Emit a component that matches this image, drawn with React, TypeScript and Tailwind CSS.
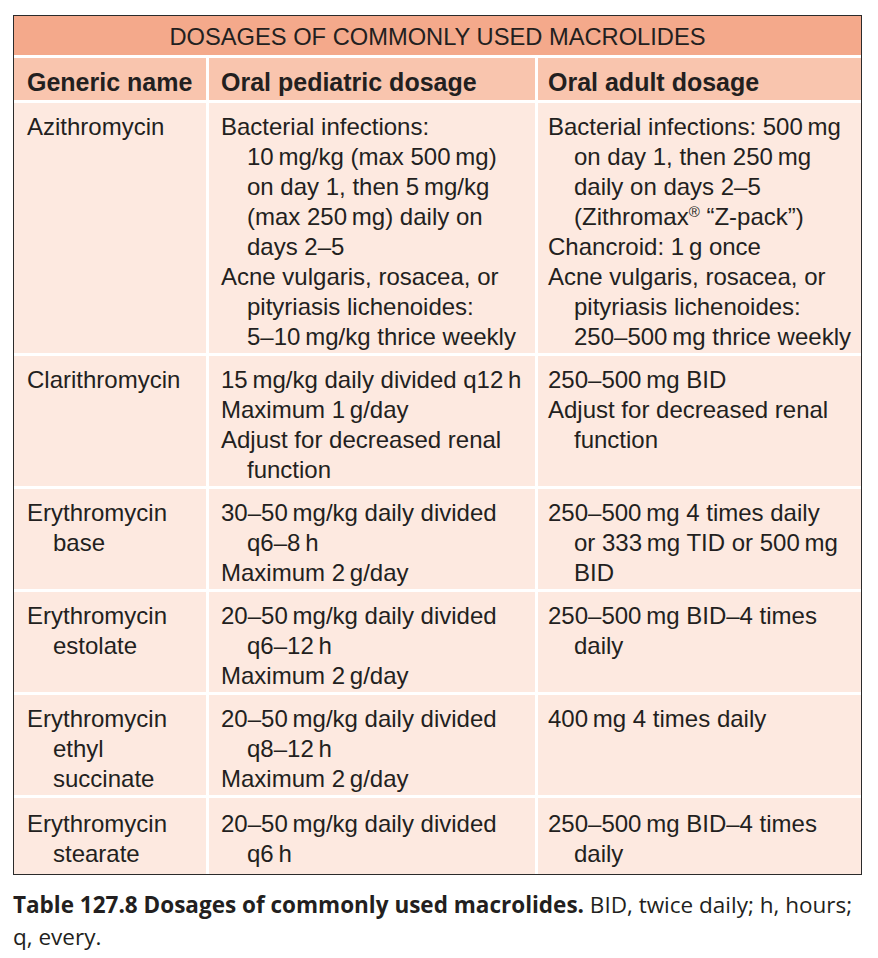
import React from "react";

type Line = React.ReactNode;
type Cell = Line[][];

const T = "\u2009";

const rows: Cell[][] = [
  [
    [["Azithromycin"]],
    [
      [
        "Bacterial infections:",
        `10${T}mg/kg (max 500${T}mg)`,
        `on day 1, then 5${T}mg/kg`,
        `(max 250${T}mg) daily on`,
        "days 2–5",
      ],
      ["Acne vulgaris, rosacea, or", "pityriasis lichenoides:", `5–10${T}mg/kg thrice weekly`],
    ],
    [
      [
        `Bacterial infections: 500${T}mg`,
        `on day 1, then 250${T}mg`,
        "daily on days 2–5",
        <>
          (Zithromax<sup className="text-[15px] -top-[0.55em]">®</sup> “Z-pack”)
        </>,
      ],
      [`Chancroid: 1${T}g once`],
      ["Acne vulgaris, rosacea, or", "pityriasis lichenoides:", `250–500${T}mg thrice weekly`],
    ],
  ],
  [
    [["Clarithromycin"]],
    [[`15${T}mg/kg daily divided q12${T}h`], [`Maximum 1${T}g/day`], ["Adjust for decreased renal", "function"]],
    [[`250–500${T}mg BID`], ["Adjust for decreased renal", "function"]],
  ],
  [
    [["Erythromycin", "base"]],
    [[`30–50${T}mg/kg daily divided`, `q6–8${T}h`], [`Maximum 2${T}g/day`]],
    [[`250–500${T}mg 4 times daily`, `or 333${T}mg TID or 500${T}mg`, "BID"]],
  ],
  [
    [["Erythromycin", "estolate"]],
    [[`20–50${T}mg/kg daily divided`, `q6–12${T}h`], [`Maximum 2${T}g/day`]],
    [[`250–500${T}mg BID–4 times`, "daily"]],
  ],
  [
    [["Erythromycin", "ethyl", "succinate"]],
    [[`20–50${T}mg/kg daily divided`, `q8–12${T}h`], [`Maximum 2${T}g/day`]],
    [[`400${T}mg 4 times daily`]],
  ],
  [
    [["Erythromycin", "stearate"]],
    [[`20–50${T}mg/kg daily divided`, `q6${T}h`]],
    [[`250–500${T}mg BID–4 times`, "daily"]],
  ],
];

const pads = ["pl-[13px]", "pl-[12px]", "pl-[10px]"];

const CellBlock = ({ cell, col, last }: { cell: Cell; col: number; last: boolean }) => (
  <div className={`bg-[#fde9e0] ${last ? "pt-[11px] pb-[5px]" : "pt-[9px] pb-[1px]"} ${pads[col]}`}>
    {cell.map((item, i) => (
      <div key={i}>
        {item.map((line, j) => (
          <div key={j} className={`whitespace-nowrap ${j > 0 ? "pl-[26px]" : ""}`}>
            {line}
          </div>
        ))}
      </div>
    ))}
  </div>
);

const App = () => {
  return (
    <div className="bg-white min-h-screen pt-[15px] pl-[13px] text-[#231f20]">
      <div
        className="w-[849px] border-[1.5px] border-[#2b2b2b] bg-white flex flex-col gap-[3px] text-[24px] leading-[30px]"
        style={{ fontFamily: '"Liberation Sans", Arial, sans-serif' }}
      >
        <div className="h-[39px] pt-[2px] bg-[#f4a98b] flex items-center justify-center text-[23.7px]">
          DOSAGES OF COMMONLY USED MACROLIDES
        </div>
        <div className="grid grid-cols-[192px_326px_1fr] gap-x-[3px] font-bold text-[25px]">
          <div className="bg-[#f9c5ae] h-[42px] pt-[5px] flex items-center pl-[13px]">Generic name</div>
          <div className="bg-[#f9c5ae] h-[42px] pt-[5px] flex items-center pl-[12px]">Oral pediatric dosage</div>
          <div className="bg-[#f9c5ae] h-[42px] pt-[5px] flex items-center pl-[10px]">Oral adult dosage</div>
        </div>
        {rows.map((row, r) => (
          <div key={r} className="grid grid-cols-[192px_326px_1fr] gap-x-[3px]">
            {row.map((cell, c) => (
              <CellBlock key={c} cell={cell} col={c} last={r === rows.length - 1} />
            ))}
          </div>
        ))}
      </div>
      <p
        className="mt-[14px] text-[22.5px] leading-[32px] whitespace-nowrap"
        style={{ fontFamily: '"Open Sans", "Noto Sans", sans-serif' }}
      >
        <span className="font-bold">Table 127.8 Dosages of commonly used macrolides.</span> BID, twice daily; h,
        hours;
        <br />
        q, every.
      </p>
    </div>
  );
};

export default App;
